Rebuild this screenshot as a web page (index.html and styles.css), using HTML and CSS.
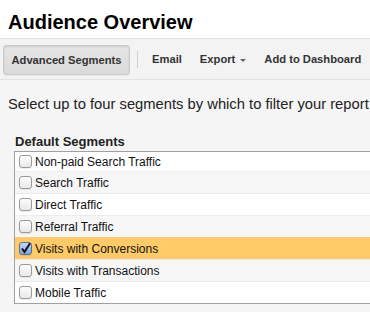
FILE: index.html
```html
<!DOCTYPE html>
<html lang="en">
<head>
  <meta charset="UTF-8" />
  <title>Audience Overview</title>
  <link rel="stylesheet" href="styles.css">
</head>
<body>

  <header class="title">
    <h1>Audience Overview</h1>
  </header>

  <nav class="toolbar">
    <button class="btn active">Advanced Segments</button>
    <span class="sep"></span>
    <a class="tool">Email</a>
    <a class="tool">Export <span class="caret"></span></a>
    <a class="tool">Add to Dashboard</a>
  </nav>

  <main>
    <p class="intro">Select up to four segments by which to filter your report</p>

    <h2>Default Segments</h2>
    <ul class="segments">
      <li><input type="checkbox"> Non-paid Search Traffic</li>
      <li><input type="checkbox"> Search Traffic</li>
      <li><input type="checkbox"> Direct Traffic</li>
      <li><input type="checkbox"> Referral Traffic</li>
      <li class="selected"><input type="checkbox" checked> Visits with Conversions</li>
      <li><input type="checkbox"> Visits with Transactions</li>
      <li><input type="checkbox"> Mobile Traffic</li>
    </ul>
  </main>

</body>
</html>
```

FILE: styles.css
```css
body {
  margin: 0;
  background: #f5f5f5;
  color: #222;
  font-family: 'Liberation Sans', Arial, sans-serif;
  white-space: nowrap;
  overflow: hidden;
}

.title {
  background: #fff;
  height: 38px;
  border-bottom: 1px solid #e2e2e2;
}

h1 {
  margin: 0;
  padding: 10px 0 0 8px;
  font-size: 20px;
  line-height: 24px;
  color: #000;
}

.toolbar {
  display: flex;
  align-items: center;
  height: 40px;
  padding: 0 3px;
  background: #f3f3f3;
  border-bottom: 1px solid #e2e2e2;
}

.toolbar > * {
  flex-shrink: 0;
}

.btn {
  font-family: inherit;
  font-size: 11.2px;
  font-weight: bold;
  color: #333;
  height: 30px;
  width: 127px;
  padding: 0;
  margin-top: 1px;
  background: linear-gradient(#e6e6e6, #dadada);
  border: 1px solid #cbcbcb;
  border-radius: 3px;
  box-shadow: inset 0 1px 2px rgba(0,0,0,0.12), 0 1px 1px rgba(0,0,0,0.05);
  white-space: nowrap;
}

.sep {
  width: 1px;
  height: 17px;
  background: #d0d0d0;
  margin: 0 14px 0 7px;
}

.tool {
  font-size: 11.2px;
  font-weight: bold;
  color: #333;
  margin-right: 18px;
  display: flex;
  align-items: center;
}

.caret {
  display: inline-block;
  margin-left: 5px;
  margin-top: 2px;
  border-left: 3px solid transparent;
  border-right: 3px solid transparent;
  border-top: 3px solid #666;
}

main {
  padding: 0 0 0 8px;
}

.intro {
  margin: 15px 0 0;
  font-size: 14.75px;
  line-height: 18px;
  color: #222;
}

h2 {
  margin: 21px 0 0 7px;
  font-size: 13px;
  line-height: 16px;
  color: #222;
}

.segments {
  list-style: none;
  margin: 1px 0 0 6px;
  padding: 0;
  background: #fff;
  border: 1px solid #a0a0a0;
  border-right: none;
}

.segments li {
  display: flex;
  align-items: center;
  height: 21px;
  font-size: 12px;
  color: #111;
  border-top: 1px solid #ececec;
}

.segments li:first-child {
  height: 19px;
  border-top: none;
}

.segments li:nth-child(even) {
  background: #f6f6f6;
}

.segments li.selected {
  background: #ffcb69;
  border-top-color: #ffcb69;
}

.segments input {
  appearance: none;
  -webkit-appearance: none;
  width: 13px;
  height: 13px;
  margin: 0 3px 0 4px;
  border: 1px solid #9a9a9a;
  border-radius: 3px;
  background: linear-gradient(#fdfdfd, #e8e8e8);
  box-shadow: 0 1px 1px rgba(0,0,0,0.08);
}

.segments input:checked {
  border-color: #5a6f95;
  background: url("data:image/svg+xml,%3Csvg xmlns='http://www.w3.org/2000/svg' viewBox='0 0 13 13'%3E%3Cpath d='M3 6.5 L5.5 10 L11.5 0.5' fill='none' stroke='%23111' stroke-width='2'/%3E%3C/svg%3E") no-repeat center/13px 13px, linear-gradient(#c5d8f6, #7aa3e6);
}
```
